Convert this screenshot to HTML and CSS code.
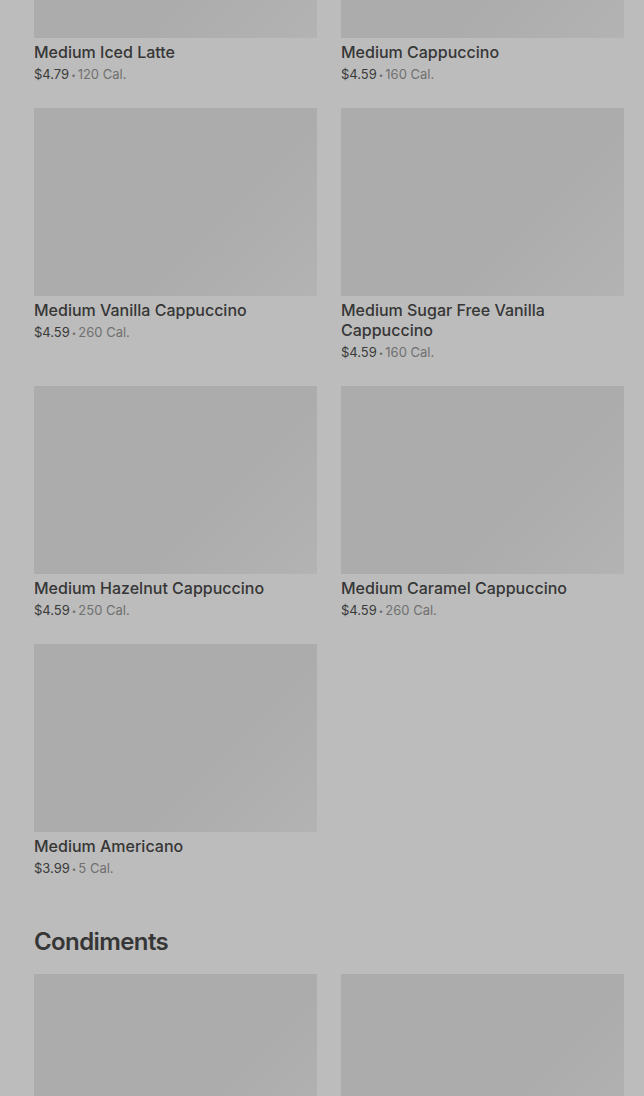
FILE: index.html
```html
<!DOCTYPE html>
<html>
<head>
<meta charset="utf-8">
<link rel="stylesheet" href="styles.css">
</head>
<body>
<main class="page">
  <section class="section first">
    <div class="grid">
      <div class="item"><div class="thumb"></div><div class="name">Medium Iced Latte</div><div class="meta"><span class="price">$4.79</span><span class="dot">•</span>120 Cal.</div></div>
      <div class="item"><div class="thumb"></div><div class="name">Medium Cappuccino</div><div class="meta"><span class="price">$4.59</span><span class="dot">•</span>160 Cal.</div></div>
      <div class="item"><div class="thumb"></div><div class="name">Medium Vanilla Cappuccino</div><div class="meta"><span class="price">$4.59</span><span class="dot">•</span>260 Cal.</div></div>
      <div class="item"><div class="thumb"></div><div class="name">Medium Sugar Free Vanilla Cappuccino</div><div class="meta"><span class="price">$4.59</span><span class="dot">•</span>160 Cal.</div></div>
      <div class="item"><div class="thumb"></div><div class="name">Medium Hazelnut Cappuccino</div><div class="meta"><span class="price">$4.59</span><span class="dot">•</span>250 Cal.</div></div>
      <div class="item"><div class="thumb"></div><div class="name">Medium Caramel Cappuccino</div><div class="meta"><span class="price">$4.59</span><span class="dot">•</span>260 Cal.</div></div>
      <div class="item"><div class="thumb"></div><div class="name">Medium Americano</div><div class="meta"><span class="price">$3.99</span><span class="dot">•</span>5 Cal.</div></div>
    </div>
  </section>
  <section class="section">
    <h2 class="heading">Condiments</h2>
    <div class="grid">
      <div class="item"><div class="thumb"></div></div>
      <div class="item"><div class="thumb"></div></div>
    </div>
  </section>
</main>
</body>
</html>
```
FILE: styles.css
```css
html, body {
  margin: 0;
  padding: 0;
  background: #bcbcbc;
  overflow: hidden;
}
body {
  font-family: Inter, "Liberation Sans", sans-serif;
  color: #333333;
}
.page {
  padding: 0 20px 0 34px;
}
.section.first {
  margin-top: -150px;
}
.grid {
  display: grid;
  grid-template-columns: 283px 283px;
  column-gap: 24px;
  row-gap: 24px;
}
.thumb {
  height: 188px;
  background: linear-gradient(135deg, #acacac 0%, #acacac 62%, #b3b3b3 100%);
}
.name {
  margin-top: 4px;
  font-size: 16px;
  line-height: 20px;
  font-weight: 500;
  color: #363636;
}
.meta {
  margin-top: 2px;
  height: 20px;
  font-size: 13px;
  line-height: 20px;
  color: #707070;
}
.price {
  color: #3a3a3a;
}
.dot {
  font-size: 8px;
  line-height: 0;
  margin: 0 2px;
  vertical-align: 1px;
}
.heading {
  margin: 48px 0 16px;
  font-size: 24px;
  line-height: 32px;
  font-weight: 600;
  letter-spacing: -0.6px;
  color: #363636;
}
```
